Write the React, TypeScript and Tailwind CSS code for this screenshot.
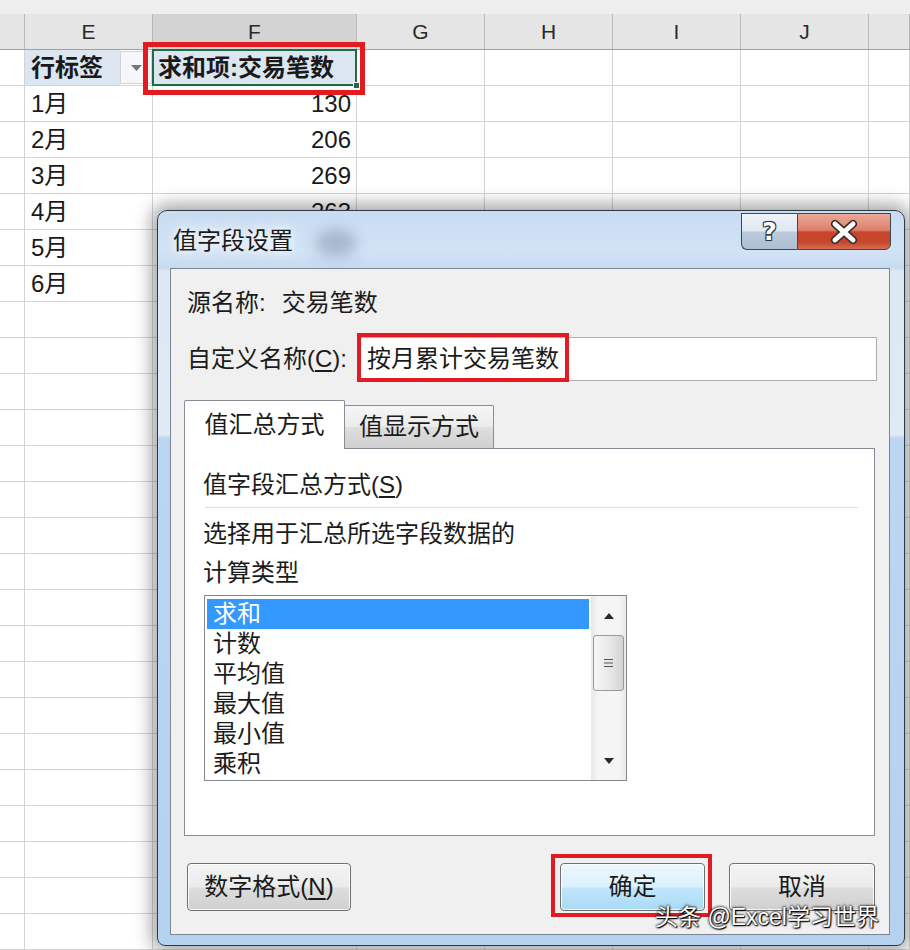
import React from "react";

const colW = ["w-[25px]", "w-[128px]", "w-[204px]", "w-[128px]", "w-[128px]", "w-[128px]", "w-[128px]", "w-[41px]"];
const letters = ["", "E", "F", "G", "H", "I", "J", ""];
const data: [string, string][] = [
  ["1月", "130"],
  ["2月", "206"],
  ["3月", "269"],
  ["4月", "263"],
  ["5月", ""],
  ["6月", ""],
];
const items = ["求和", "计数", "平均值", "最大值", "最小值", "乘积"];

function HeaderRow() {
  return (
    <div className="flex h-[36px] bg-[#e5e5e5] border-b border-[#a0a0a0]">
      {colW.map((w, i) => (
        <div
          key={i}
          className={`${w} flex-none h-full border-r border-[#b8b8b8] flex items-center justify-center text-[21px] text-[#2a2a2a] ${
            i === 2 ? "bg-[#d3d3d3]" : ""
          }`}
        >
          {letters[i]}
        </div>
      ))}
    </div>
  );
}

function PivotHeaderRow() {
  return (
    <div className="flex h-[36px] border-b border-[#d4d4d4]">
      <div className="w-[25px] flex-none border-r border-[#d4d4d4]" />
      <div className="w-[128px] flex-none border-r border-[#d4d4d4] flex">
        <div className="w-[95px] h-full bg-[#dce6f1] pl-[6px] flex items-center font-bold text-[24px] leading-[30px] text-[#1a1a1a]">
          行标签
        </div>
        <div className="flex-1 my-[1px] border border-[#d0d4da] bg-[#f5f7fa] flex items-center justify-center">
          <svg width="11" height="6" viewBox="0 0 11 6">
            <polygon points="0,0 11,0 5.5,6" fill="#767676" />
          </svg>
        </div>
      </div>
      <div className="relative w-[204px] flex-none border-r border-[#d4d4d4] bg-[#dce6f1] pl-[5px] flex items-center font-bold text-[24px] leading-[30px] text-[#1a1a1a]">
        求和项:交易笔数
        <div className="absolute left-[-1px] top-[-1px] right-[-1px] bottom-[-1px] border-2 border-[#1f6b43]" />
        <div className="absolute right-[-4px] bottom-[-4px] w-[7px] h-[7px] bg-[#1f6b43] border border-white" />
        <div className="absolute z-20 left-[-10px] top-[-8px] w-[222px] h-[53px] border-[5px] border-[#e21b23]" />
      </div>
      {[3, 4, 5, 6, 7].map((i) => (
        <div key={i} className={`${colW[i]} flex-none border-r border-[#d4d4d4]`} />
      ))}
    </div>
  );
}

function DataRow({ label, value }: { label?: string; value?: string }) {
  return (
    <div className="flex h-[36px] border-b border-[#d4d4d4]">
      <div className="w-[25px] flex-none border-r border-[#d4d4d4]" />
      <div className="w-[128px] flex-none border-r border-[#d4d4d4] pl-[6px] flex items-center text-[24px] leading-[30px] text-[#1a1a1a]">
        {label}
      </div>
      <div className="w-[204px] flex-none border-r border-[#d4d4d4] pr-[5px] flex items-center justify-end text-[24px] leading-[30px] text-[#1a1a1a]">
        {value}
      </div>
      {[3, 4, 5, 6, 7].map((i) => (
        <div key={i} className={`${colW[i]} flex-none border-r border-[#d4d4d4]`} />
      ))}
    </div>
  );
}

const btn =
  "h-[48px] rounded-[4px] border border-[#707070] flex items-center justify-center text-[24px] leading-[30px] text-[#1a1a1a] shadow-[inset_0_0_0_1px_rgba(255,255,255,0.85)]";

function Dialog() {
  return (
    <div className="absolute left-[157px] top-[210px] w-[748px] h-[736px] rounded-t-[10px] rounded-b-[8px] border border-[#2e3946] shadow-[0_0_18px_5px_rgba(0,0,0,0.38)] bg-[linear-gradient(180deg,#c8dcf2_0px,#d2e3f5_40px,#c6dbf1_57px,#dde8f4_60px,#e0eaf5_224px,#bbd6f3_227px,#b5d1f0_100%)] flex flex-col">
      {/* title bar */}
      <div className="relative h-[57px] flex-none">
        <div className="absolute left-[158px] top-[19px] w-[40px] h-[26px] rounded-full bg-[rgba(70,90,120,0.3)] blur-[7px]" />
        <div className="relative pl-[15px] pt-[15px] text-[24px] leading-[30px] text-[#1b1b1b] [text-shadow:0_0_8px_#ffffff,0_0_14px_#ffffff]">
          值字段设置
        </div>
        <div className="absolute right-[13px] top-[2px] flex">
          <div className="w-[56px] h-[37px] border border-r-0 border-[#3b4756] rounded-bl-[6px] bg-[linear-gradient(180deg,#eef3f9_0%,#dfe7f1_48%,#bccbdc_52%,#aebfd3_100%)] flex items-center justify-center font-['DejaVu_Sans',sans-serif] font-bold text-[25px] leading-none text-white [text-shadow:-1px_-1px_0_#2d3744,1px_-1px_0_#2d3744,-1px_1px_0_#2d3744,1px_1px_0_#2d3744,0_0_2px_#2d3744]">
            ?
          </div>
          <div className="w-[94px] h-[37px] border border-[#3b4756] rounded-br-[6px] bg-[linear-gradient(180deg,#eaa999_0%,#de806b_46%,#c8452b_52%,#c4462d_80%,#d56d53_100%)] flex items-center justify-center">
            <svg width="32" height="24" viewBox="0 0 32 24">
              <path d="M7 4 L25 20 M25 4 L7 20" stroke="#3a2a28" strokeWidth="8" strokeLinecap="round" />
              <path d="M7 4 L25 20 M25 4 L7 20" stroke="#ffffff" strokeWidth="5" strokeLinecap="round" />
            </svg>
          </div>
        </div>
      </div>

      {/* client */}
      <div className="ml-[12px] mr-[14px] h-[667px] border border-[#7b8694] bg-[#f0f0f0] flex flex-col text-[24px] leading-[30px] text-[#1b1b1b]">
        <div className="mt-[19px] ml-[16px] h-[30px] flex items-center">
          <span>源名称:</span>
          <span className="ml-[16px]">交易笔数</span>
        </div>

        <div className="mt-[19px] ml-[16px] mr-[12px] h-[44px] flex items-center">
          <div className="w-[170px] flex-none">
            自定义名称(<span className="underline underline-offset-[3px]">C</span>):
          </div>
          <div className="relative flex-1 h-[44px] border border-[#abadb3] bg-white pl-[9px] flex items-center">
            按月累计交易笔数
            <div className="absolute left-[-1px] top-[-5px] w-[212px] h-[49px] border-[4px] border-[#e21b23]" />
          </div>
        </div>

        {/* tabs */}
        <div className="mt-[19px] ml-[13px] w-[691px]">
          <div className="relative z-10 flex items-end">
            <div className="h-[49px] -mb-px w-[161px] border border-b-0 border-[#898c95] bg-white rounded-t-[2px] flex items-center justify-center">
              值汇总方式
            </div>
            <div className="h-[43px] w-[149px] border-t border-r border-[#898c95] rounded-tr-[2px] bg-[linear-gradient(180deg,#f6f6f6_0%,#ececec_48%,#dedede_52%,#d0d0d0_100%)] flex items-center justify-center">
              值显示方式
            </div>
          </div>
          <div className="h-[388px] border border-[#898c95] bg-white flex flex-col">
            <div className="mt-[21px] ml-[18px] h-[30px]">
              值字段汇总方式(<span className="underline underline-offset-[3px]">S</span>)
            </div>
            <div className="mt-[7px] ml-[20px] w-[653px] h-px bg-[#d9e1e7]" />
            <div className="mt-[11px] ml-[18px] h-[30px]">选择用于汇总所选字段数据的</div>
            <div className="mt-[9px] ml-[18px] h-[30px]">计算类型</div>
            <div className="mt-[7px] ml-[19px] w-[423px] h-[186px] border border-[#828790] bg-white flex">
              <div className="flex-1 pt-[3px] pl-[2px] pr-[2px]">
                {items.map((t, i) => (
                  <div
                    key={t}
                    className={`h-[30px] leading-[30px] pl-[6px] ${
                      i === 0 ? "bg-[#3399ff] text-white" : "text-[#1b1b1b]"
                    }`}
                  >
                    {t}
                  </div>
                ))}
              </div>
              <div className="w-[35px] flex-none flex flex-col bg-[linear-gradient(90deg,#e6e6e6,#f5f5f5_20%,#f5f5f5_80%,#e9e9e9)]">
                <div className="h-[39px] flex items-center justify-center">
                  <svg width="10" height="6" viewBox="0 0 10 6">
                    <polygon points="0,6 10,6 5,0" fill="#2a2a2a" />
                  </svg>
                </div>
                <div className="mx-[2px] h-[56px] rounded-[3px] border border-[#9a9a9a] bg-[linear-gradient(90deg,#f6f6f6,#e9e9e9_50%,#d5d5d5)] flex items-center justify-center">
                  <svg width="9" height="10" viewBox="0 0 9 10">
                    <path d="M0 1.5 H9 M0 5 H9 M0 8.5 H9" stroke="#555" strokeWidth="1" />
                  </svg>
                </div>
                <div className="flex-1" />
                <div className="h-[38px] flex items-center justify-center">
                  <svg width="10" height="6" viewBox="0 0 10 6">
                    <polygon points="0,0 10,0 5,6" fill="#2a2a2a" />
                  </svg>
                </div>
              </div>
            </div>
          </div>
        </div>

        {/* buttons */}
        <div className="mt-[27px] pl-[16px] pr-[14px] flex">
          <div className={`${btn} w-[164px] bg-[linear-gradient(180deg,#f3f3f3_0%,#ebebeb_50%,#dddddd_52%,#cfcfcf_100%)]`}>
            数字格式(<span className="underline underline-offset-[3px]">N</span>)
          </div>
          <div className="relative ml-auto w-[145px]">
            <div className={`${btn} w-[145px] border-[#3c7fb1] bg-[linear-gradient(180deg,#ebf7fe_0%,#dcf1fc_50%,#c1e6fb_52%,#a9daf4_100%)]`}>
              确定
            </div>
            <div className="absolute left-[-9px] top-[-9px] right-[-7px] bottom-[-6px] border-[4px] border-[#e21b23]" />
          </div>
          <div className={`${btn} ml-[24px] w-[146px] bg-[linear-gradient(180deg,#f3f3f3_0%,#ebebeb_50%,#dddddd_52%,#cfcfcf_100%)]`}>
            取消
          </div>
        </div>
      </div>
    </div>
  );
}

export default function App() {
  const empty = Array.from({ length: 18 });
  return (
    <div className="relative w-[910px] h-[950px] overflow-hidden bg-white font-['Liberation_Sans','Noto_Sans_CJK_SC',sans-serif]">
      <div className="h-[14px] bg-[#efefef]" />
      <HeaderRow />
      <PivotHeaderRow />
      {data.map(([l, v]) => (
        <DataRow key={l} label={l} value={v} />
      ))}
      {empty.map((_, i) => (
        <DataRow key={i} />
      ))}
      <Dialog />
      <div className="absolute left-[655px] top-[902px] text-[23px] leading-[30px] text-white [text-shadow:0_0_2px_#000,0_0_3px_#000,1px_1px_1px_#000]">
        头条 @Excel学习世界
      </div>
    </div>
  );
}
